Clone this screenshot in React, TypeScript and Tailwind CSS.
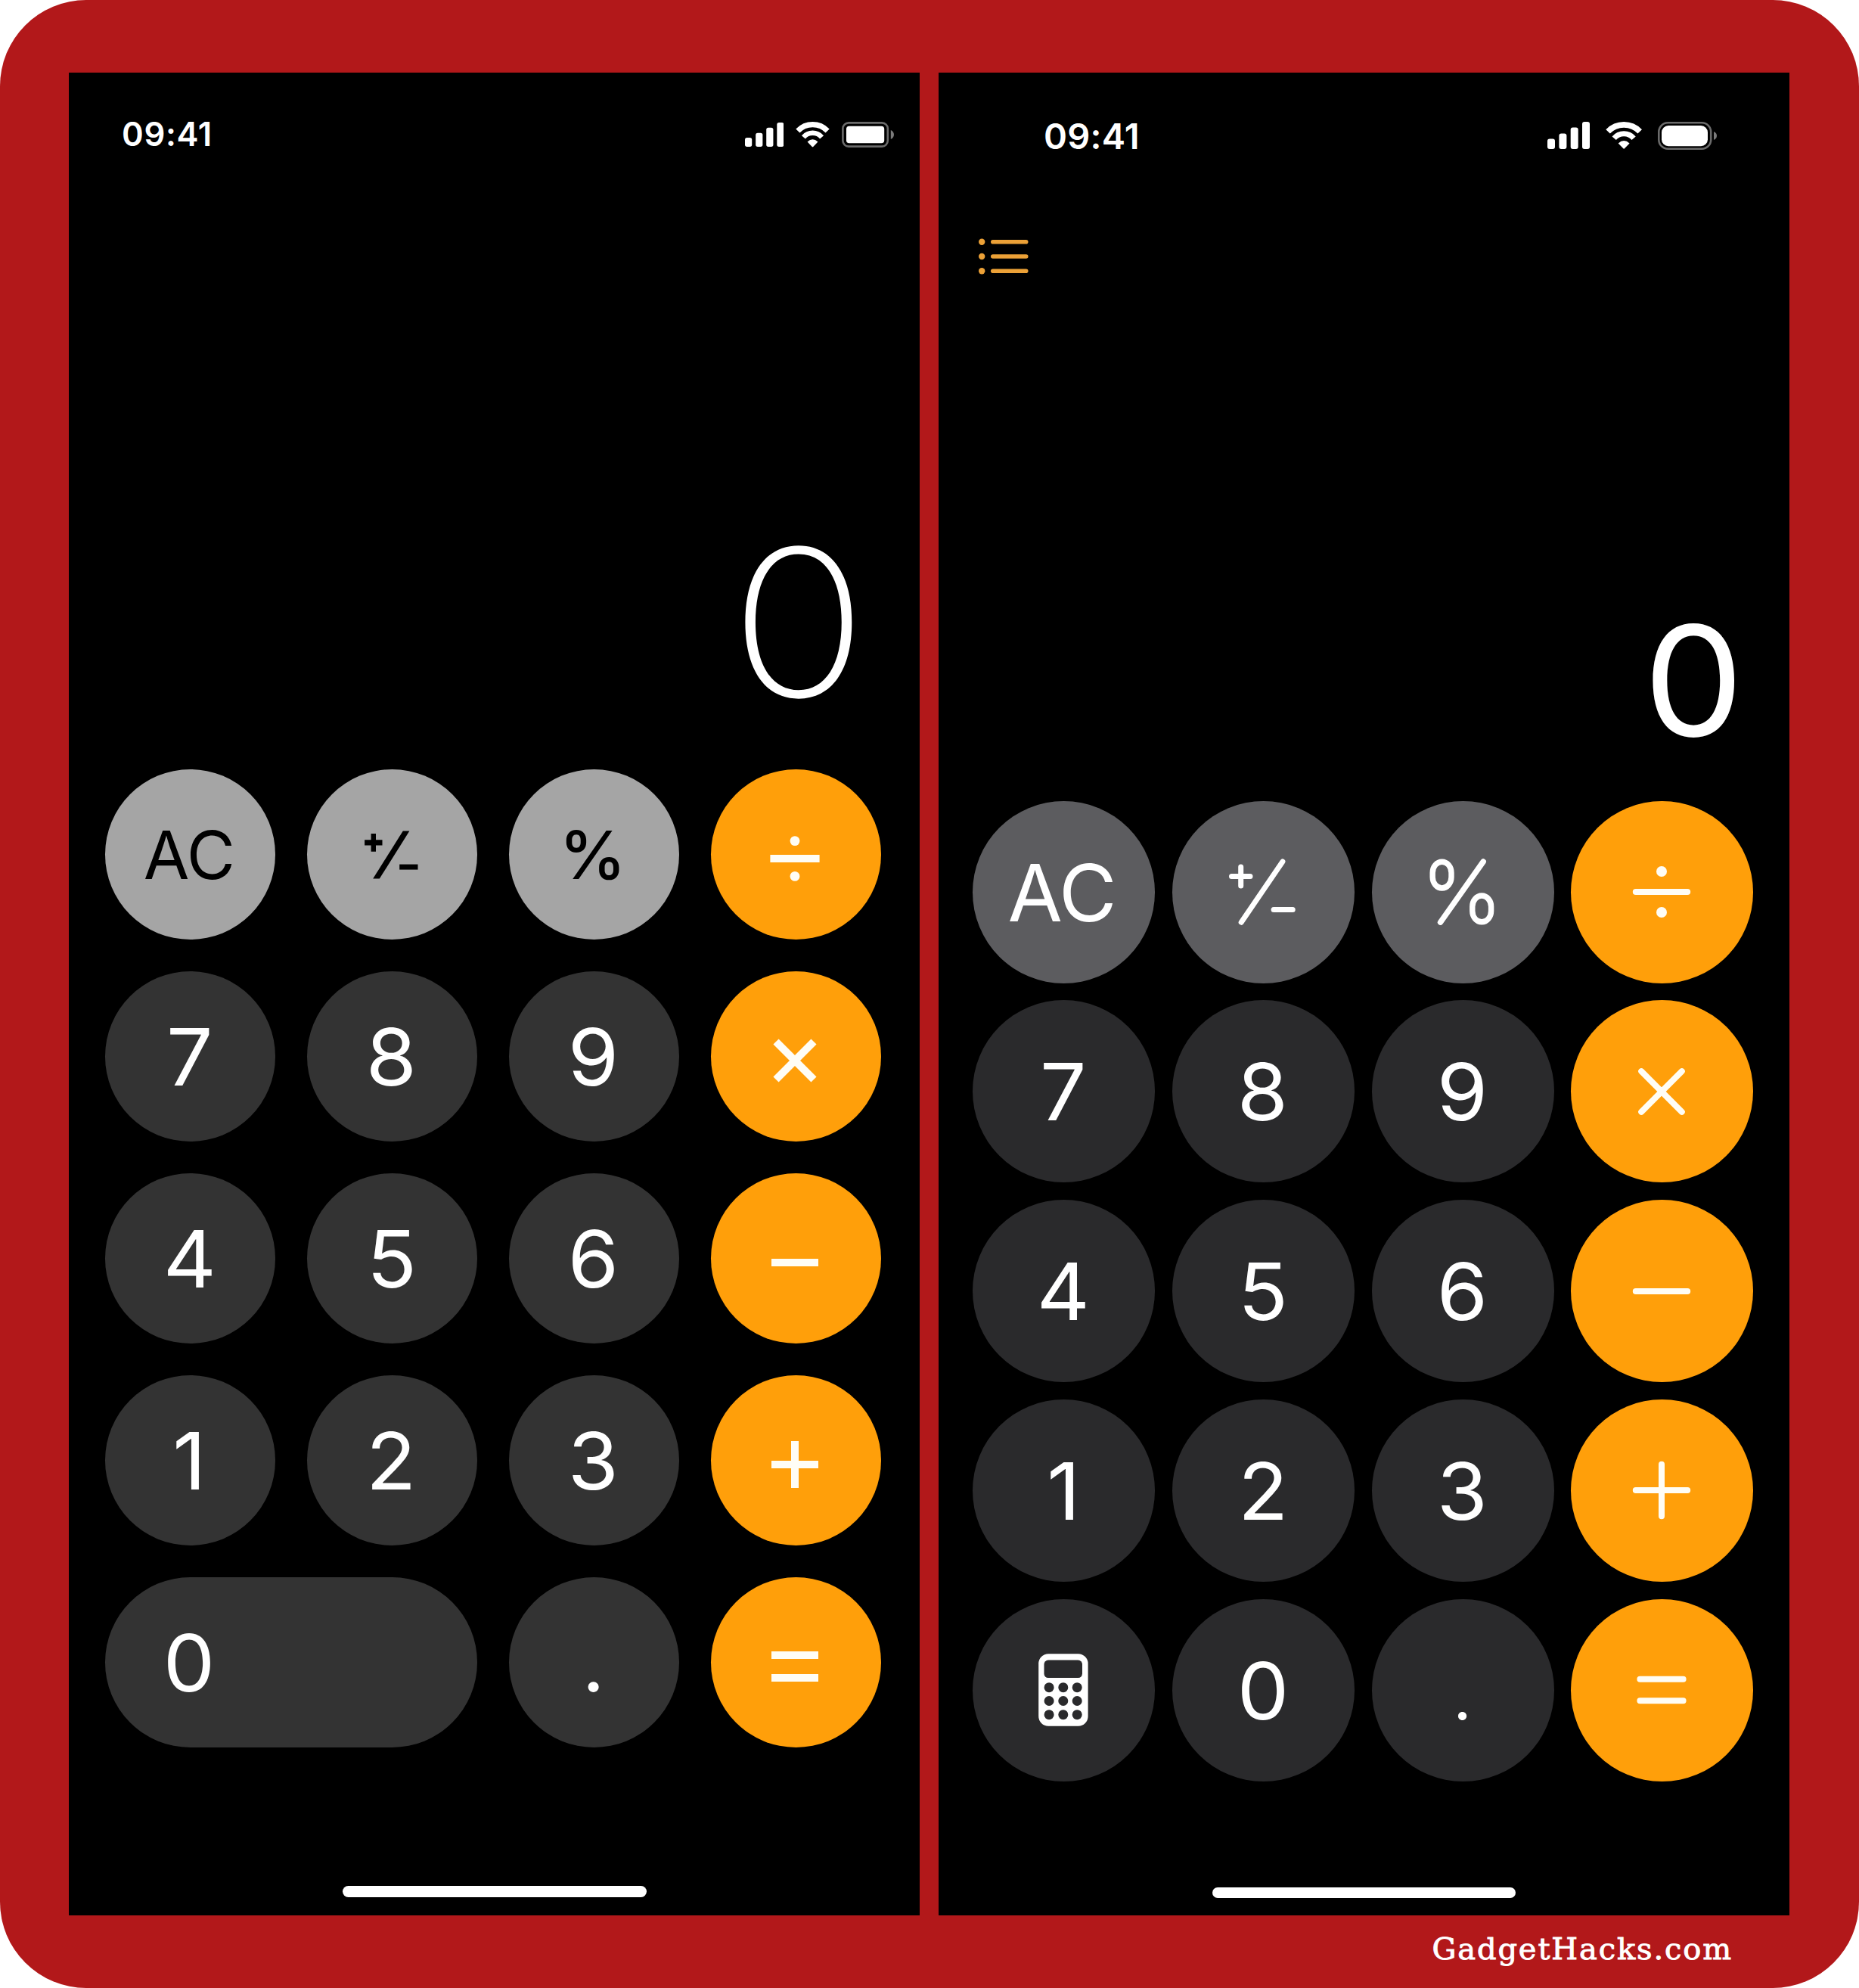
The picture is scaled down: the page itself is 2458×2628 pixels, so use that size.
import React from "react";

type Key = { id: string; content: React.ReactNode; tone: string; extra?: string };

function SignalIcon({ className }: { className: string }) {
  return (
    <svg className={className} viewBox="0 0 56 36" preserveAspectRatio="none" fill="#fff">
      <rect x="0" y="22.6" width="10" height="13.4" rx="3" />
      <rect x="15.4" y="15.6" width="10" height="20.4" rx="3" />
      <rect x="30.7" y="7.6" width="10" height="28.4" rx="3" />
      <rect x="46" y="0" width="10" height="36" rx="3" />
    </svg>
  );
}

function WifiIcon({ className }: { className: string }) {
  return (
    <svg className={className} viewBox="0 0 48.3 35.8" fill="none">
      <path d="M3.08 12.86A29.15 29.15 0 0 1 45.22 12.86" stroke="#fff" strokeWidth="7.6" />
      <path d="M11.17 21.72A17.2 17.2 0 0 1 37.13 21.72" stroke="#fff" strokeWidth="7" />
      <path d="M16.7 28.4Q24.15 21.6 31.6 28.4L25.2 35.1Q24.15 36.2 23.1 35.1Z" fill="#fff" />
    </svg>
  );
}

function BatteryOld() {
  return (
    <svg className="h-[34px] w-[69px]" viewBox="0 0 69 34" fill="none">
      <rect x="1.4" y="1.4" width="59.4" height="31.2" rx="7.6" stroke="#6b6b6b" strokeWidth="2.6" />
      <rect x="6" y="5.8" width="50.2" height="22.4" rx="3.8" fill="#fff" />
      <path d="M64.8 11v12c2.7-1.2 4.2-3.4 4.2-6s-1.5-4.8-4.2-6Z" fill="#7a7a7a" />
    </svg>
  );
}

function BatteryNew() {
  return (
    <svg className="h-[37px] w-[78px]" viewBox="0 0 78 37" fill="none">
      <rect x="1.3" y="1.3" width="68.9" height="34.4" rx="12" stroke="#6b6b6b" strokeWidth="2.6" />
      <rect x="5" y="5" width="61" height="27.2" rx="9" fill="#fff" />
      <path d="M74 13v11c2.6-1 4-3 4-5.5S76.6 14 74 13Z" fill="#7a7a7a" />
    </svg>
  );
}

/* Operator glyphs share an 80x80 box centred on (40,40). */
function Op({ kind, round }: { kind: string; round?: boolean }) {
  const cap = round ? "round" : "butt";
  const w = round ? 8 : 10;
  const h = round ? 34.2 : 31;
  const x = round ? 26.8 : 25;
  const e = round ? 28.6 : 31;
  const gap = round ? 14.3 : 15;
  const dot = round ? 27 : 23.4;
  return (
    <svg className="size-20" viewBox="0 0 80 80" fill="none" stroke="#fffdf5" strokeWidth={w} strokeLinecap={cap}>
      {kind === "divide" && (
        <>
          <path d={`M${40 - h - (round ? 0 : 1.6)} 40H${40 + h + (round ? 0 : 1.6)}`} />
          <circle cx="40" cy={40 - dot} r={round ? 7 : 6.4} fill="#fffdf5" stroke="none" />
          <circle cx="40" cy={40 + dot} r={round ? 7 : 6.4} fill="#fffdf5" stroke="none" />
        </>
      )}
      {kind === "times" && <path d={`M${40 - x} ${40 - x}L${40 + x} ${40 + x}M${40 + x} ${40 - x}L${40 - x} ${40 + x}`} />}
      {kind === "minus" && <path d={`M${40 - h} 40H${40 + h}`} />}
      {kind === "plus" && <path d={`M${40 - h} 40H${40 + h}M40 ${40 - h}V${40 + h}`} />}
      {kind === "equals" && <path d={`M${40 - e} ${40 - gap}H${40 + e}M${40 - e} ${40 + gap}H${40 + e}`} />}
    </svg>
  );
}

function SignOld() {
  return (
    <svg className="h-16 w-[72px]" viewBox="0 0 72 64" fill="#000">
      <path d="M9.6 4h6.4v8.300h8.500v7.200h-8.500v8.300h-6.400v-8.300H1.100v-7.200h8.500z" />
      <path d="M51.800 .4h8.600L20.800 63.600h-8.600z" />
      <path d="M47.200 44.600h24.300v7H47.200z" />
    </svg>
  );
}

function SignNew() {
  return (
    <svg className="h-[88px] w-[88px]" viewBox="0 0 88 88" fill="none" stroke="#fff" strokeWidth="7" strokeLinecap="round">
      <path d="M3.5 23.5H28M15.7 11V36" />
      <path d="M70.9 4L16.2 84.2" />
      <path d="M59.1 67.4H84.2" />
    </svg>
  );
}

function PercentNew() {
  return (
    <svg className="h-[88px] w-[86px]" viewBox="0 0 86 88" fill="none" stroke="#fff" strokeWidth="7.4" strokeLinecap="round">
      <rect x="4.2" y="4.2" width="24.8" height="34.8" rx="12.4" ry="14.5" />
      <rect x="56.8" y="49" width="24.8" height="34.8" rx="12.4" ry="14.5" />
      <path d="M71.2 4L14.6 84.2" />
    </svg>
  );
}

function CalculatorIcon() {
  const cols = [14.1, 32.8, 51.2];
  const rows = [44.7, 62.5, 80.7];
  return (
    <svg className="h-[96px] w-[66px]" viewBox="0 0 66 96">
      <rect x="0.2" y="0.3" width="65.4" height="95.4" rx="13" fill="#fff" />
      <rect x="7.5" y="8.6" width="50.5" height="23.4" rx="5.5" fill="#2a2a2c" />
      {rows.map((cy) => cols.map((cx) => <circle key={`${cx}-${cy}`} cx={cx} cy={cy} r="6.5" fill="#2a2a2c" />))}
    </svg>
  );
}

function ListIcon() {
  return (
    <svg className="h-[48px] w-[66px]" viewBox="0 0 66 48" fill="#eca137">
      {[4.8, 24, 43.2].map((y) => (
        <g key={y}>
          <circle cx="4.2" cy={y} r="4.2" />
          <rect x="16" y={y - 2.8} width="49.5" height="5.6" rx="2.8" />
        </g>
      ))}
    </svg>
  );
}

function Digit({ value }: { value: string }) {
  return <span className="inline-block scale-x-[1.035]">{value}</span>;
}

const oldDigit = "bg-[#333333] text-white text-[105px] font-normal pr-[2px]";
const oldTop = "bg-[#a5a5a5] text-black text-[88px] font-normal pr-[3px]";
const oldOp = "bg-[#ff9f0a] pr-[3px] pt-[11px]";

const oldDigits = (row: string[]): Key[] =>
  row.map((d) => ({ id: d, content: <Digit value={d} />, tone: oldDigit }));

const oldKeys: Key[] = [
  { id: "ac", content: <span className="inline-block tracking-[-0.8px]">AC</span>, tone: oldTop },
  { id: "sign", content: <SignOld />, tone: oldTop },
  { id: "percent", content: <span className="inline-block scale-x-[1.01] font-medium">%</span>, tone: oldTop },
  { id: "divide", content: <Op kind="divide" />, tone: oldOp },
  ...oldDigits(["7", "8", "9"]),
  { id: "times", content: <Op kind="times" />, tone: oldOp },
  ...oldDigits(["4", "5", "6"]),
  { id: "minus", content: <Op kind="minus" />, tone: oldOp },
  ...oldDigits(["1", "2", "3"]),
  { id: "plus", content: <Op kind="plus" />, tone: oldOp },
  {
    id: "0",
    content: (
      <span className="flex w-[223px] justify-center">
        <Digit value="0" />
      </span>
    ),
    tone: "bg-[#333333] text-white text-[105px] font-normal",
    extra: "col-span-2 !justify-start",
  },
  { id: "dot", content: ".", tone: oldDigit },
  { id: "equals", content: <Op kind="equals" />, tone: oldOp },
];

const newDigit = "bg-[#2a2a2c] text-white text-[105px] font-normal pr-[1px]";
const newTop = "bg-[#5c5c5f] text-white text-[105px] font-normal pr-[2px]";
const newOp = "bg-[#ff9f0a] pr-[2px]";

const newDigits = (row: string[]): Key[] =>
  row.map((d) => ({ id: d, content: <Digit value={d} />, tone: newDigit }));

const newKeys: Key[] = [
  { id: "ac", content: <span className="inline-block pr-[3px] tracking-[-1.2px]">AC</span>, tone: newTop },
  { id: "sign", content: <SignNew />, tone: newTop },
  { id: "percent", content: <PercentNew />, tone: newTop },
  { id: "divide", content: <Op kind="divide" round />, tone: newOp },
  ...newDigits(["7", "8", "9"]),
  { id: "times", content: <Op kind="times" round />, tone: newOp },
  ...newDigits(["4", "5", "6"]),
  { id: "minus", content: <Op kind="minus" round />, tone: newOp },
  ...newDigits(["1", "2", "3"]),
  { id: "plus", content: <Op kind="plus" round />, tone: newOp },
  { id: "calc", content: <CalculatorIcon />, tone: newDigit },
  ...newDigits(["0"]),
  { id: "dot", content: <span className="font-light">.</span>, tone: newDigit },
  { id: "equals", content: <Op kind="equals" round />, tone: newOp },
];

function Keypad({ keys, grid }: { keys: Key[]; grid: string }) {
  return (
    <div className={`grid ${grid}`}>
      {keys.map((k) => (
        <button key={k.id} className={`flex items-center justify-center rounded-full leading-none ${k.tone} ${k.extra ?? ""}`}>
          {k.content}
        </button>
      ))}
    </div>
  );
}

export default function App() {
  return (
    <div className="h-[2628px] w-[2458px] bg-white">
      <div className="flex h-[2628px] w-[2458px] flex-col rounded-[114px] bg-[#b2181a] pt-24 pl-[91px] font-['Inter',sans-serif]">
        <div className="flex gap-[25px]">
          <section className="flex h-[2436px] w-[1125px] flex-col bg-black">
            <header className="flex h-[164px] items-center justify-between pr-[34px] pl-[70px]">
              <span className="text-[43.5px] leading-none font-semibold tracking-[0.7px] text-white">09:41</span>
              <div className="flex items-center gap-4">
                <SignalIcon className="h-8 w-[51.5px]" />
                <WifiIcon className="h-[33.5px] w-[45px]" />
                <BatteryOld />
              </div>
            </header>
            <div className="flex h-[757px] items-end justify-end pr-[69px] pb-[59px]">
              <span className="inline-block origin-right scale-x-[1.11] text-[271px] leading-none font-extralight text-white">0</span>
            </div>
            <Keypad keys={oldKeys} grid="ml-12 grid-cols-[repeat(4,225px)] auto-rows-[225px] gap-[42px]" />
            <div className="mt-auto mb-6 h-[15px] w-[402px] self-center rounded-full bg-white" />
          </section>

          <section className="flex h-[2436px] w-[1125px] flex-col bg-black">
            <header className="flex h-[166px] items-center justify-between pr-[96px] pl-[139px]">
              <span className="text-[47px] leading-none font-semibold tracking-[0.2px] text-white">09:41</span>
              <div className="flex items-center gap-[21px]">
                <SignalIcon className="h-9 w-14" />
                <WifiIcon className="h-[35.8px] w-[48.3px]" />
                <BatteryNew />
              </div>
            </header>
            <div className="flex h-[154px] items-center pl-[53px]">
              <ListIcon />
            </div>
            <div className="flex h-[642.6px] items-end justify-end pr-[61px] pb-[58px]">
              <span className="inline-block origin-right scale-x-[1.04] text-[202px] leading-none font-normal text-white">0</span>
            </div>
            <Keypad keys={newKeys} grid="ml-[45px] grid-cols-[repeat(4,241px)] auto-rows-[241px] gap-[22.8px]" />
            <div className="mt-auto mb-[23px] h-[14px] w-[401px] self-center rounded-full bg-white" />
          </section>
        </div>
        <footer className="flex h-24 items-center justify-end pr-[167px] pb-2">
          <span className="font-['DejaVu_Serif',serif] text-[40px] leading-none tracking-[1.85px] text-white [-webkit-text-stroke:0.9px_white]">
            GadgetHacks.com
          </span>
        </footer>
      </div>
    </div>
  );
}
